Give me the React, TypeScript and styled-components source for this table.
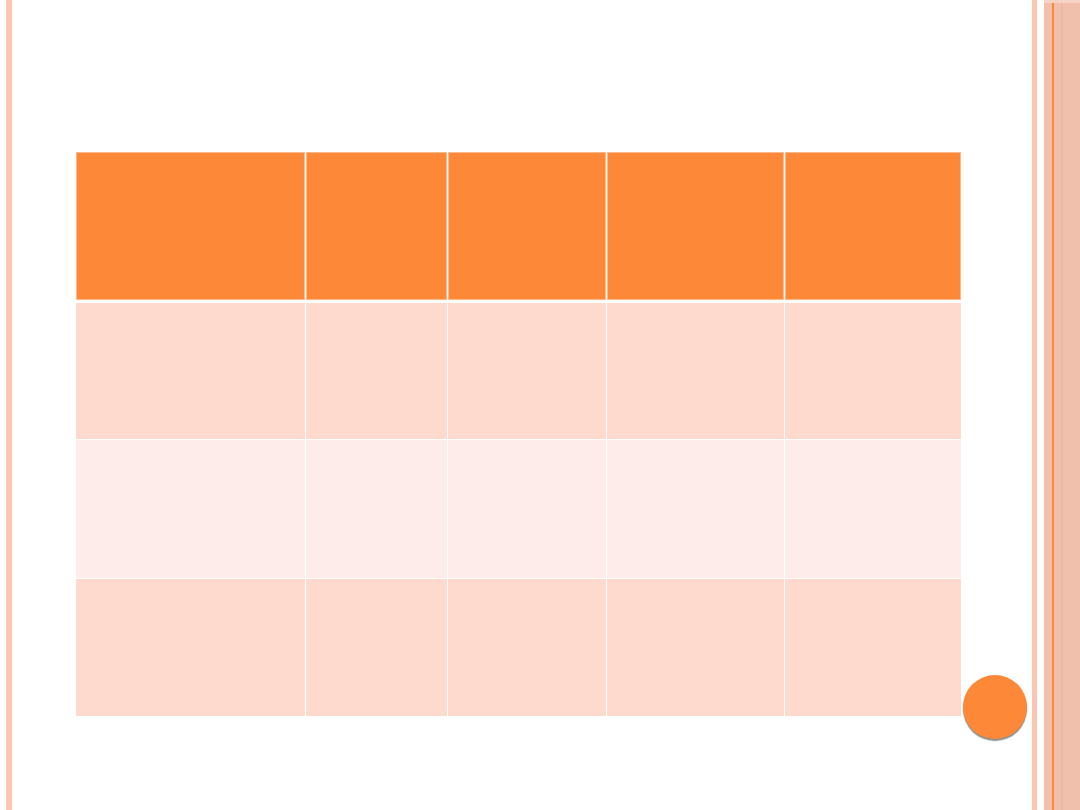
import { createGlobalStyle, styled } from "styled-components";

const COLS = "229px 141px 158px 177px 176px";

const ROWS = [
  { height: 136, tone: "dark" },
  { height: 138, tone: "light" },
  { height: 137, tone: "dark" },
] as const;

const GlobalStyle = createGlobalStyle`
  html, body {
    margin: 0;
    padding: 0;
    background: #ffffff;
    font-family: "Liberation Sans", Arial, sans-serif;
  }
`;

const Slide = styled.div`
  position: relative;
  width: 1080px;
  height: 810px;
  display: flex;
  background: #ffffff;
  overflow: hidden;
`;

const LeftStripe = styled.div`
  width: 6px;
  margin-left: 6px;
  background: #fec5b1;
  flex-shrink: 0;
`;

const Content = styled.main`
  flex: 1;
  padding: 152px 0 0 64px;
`;

const Table = styled.div`
  display: flex;
  flex-direction: column;
  gap: 1px;
  width: 885px;
`;

const Row = styled.div<{ $h: number }>`
  display: grid;
  grid-template-columns: ${COLS};
  column-gap: 1px;
  height: ${({ $h }) => $h}px;
`;

const HeaderRow = styled(Row)`
  margin-bottom: 2px;
`;

const HeadCell = styled.div`
  background: #fd8838;
  box-shadow: inset 0 0 0 1px #fdb98c;
`;

const Cell = styled.div<{ $tone: "dark" | "light" }>`
  background: ${({ $tone }) => ($tone === "dark" ? "#fdd9ce" : "#feece8")};
`;

const RightDeco = styled.aside`
  display: flex;
  flex-shrink: 0;
  gap: 7px;
`;

const ThinStripe = styled.div`
  width: 5px;
  background: #fec5b1;
`;

const Band = styled.div`
  width: 36px;
  display: flex;
  gap: 7px;
  padding-left: 8px;
  box-sizing: border-box;
  background: #f0c0ad;
  border-top: 3px solid #f6d3c4;
`;

const BandLine = styled.div<{ $strong?: boolean }>`
  width: 2px;
  background: ${({ $strong }) => ($strong ? "#fd8838" : "#ebb8a4")};
`;

const Dot = styled.div`
  position: absolute;
  left: 963px;
  top: 675px;
  width: 64px;
  height: 64px;
  border-radius: 50%;
  background: #fd8838;
  box-shadow: 0 2px 1px #8f8f8f;
`;

const App = () => (
  <>
    <GlobalStyle />
    <Slide>
      <LeftStripe />
      <Content>
        <Table>
          <HeaderRow $h={148}>
            {[0, 1, 2, 3, 4].map((i) => (
              <HeadCell key={i} />
            ))}
          </HeaderRow>
          {ROWS.map((row, r) => (
            <Row key={r} $h={row.height}>
              {[0, 1, 2, 3, 4].map((i) => (
                <Cell key={i} $tone={row.tone} />
              ))}
            </Row>
          ))}
        </Table>
      </Content>
      <RightDeco>
        <ThinStripe />
        <Band>
          <BandLine $strong />
          <BandLine />
        </Band>
      </RightDeco>
      <Dot />
    </Slide>
  </>
);

export default App;
